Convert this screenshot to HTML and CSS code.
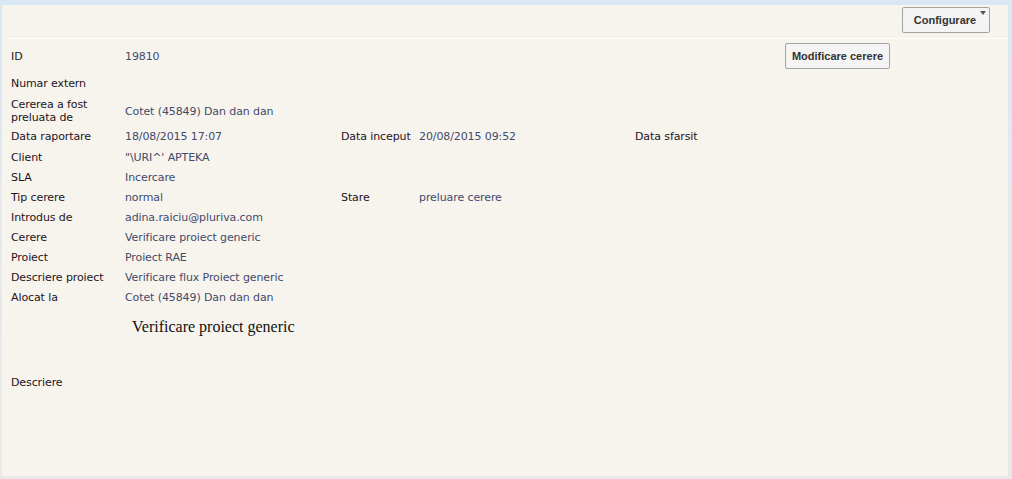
FILE: index.html
```html
<!DOCTYPE html>
<html lang="ro">
<head>
<meta charset="utf-8">
<title>Cerere 19810</title>
<link rel="stylesheet" href="styles.css">
</head>
<body>
<div class="panel">
  <div class="toolbar">
    <button class="btn btn-menu">Configurare<span class="caret"></span></button>
  </div>
  <div class="divider"></div>
  <div class="details">
    <div class="row row-id">
      <span class="lbl">ID</span><span class="val">19810</span><span></span><span></span><span></span>
      <button class="btn btn-edit">Modificare cerere</button>
    </div>
    <div class="row row-tall"><span class="lbl">Numar extern</span><span class="val"></span></div>
    <div class="row row-two"><span class="lbl">Cererea a fost<br>preluata de</span><span class="val">Cotet (45849) Dan dan dan</span></div>
    <div class="row row-21">
      <span class="lbl">Data raportare</span><span class="val">18/08/2015 17:07</span>
      <span class="lbl">Data inceput</span><span class="val">20/08/2015 09:52</span>
      <span class="lbl">Data sfarsit</span>
    </div>
    <div class="row"><span class="lbl">Client</span><span class="val">"\URI^' APTEKA</span></div>
    <div class="row"><span class="lbl">SLA</span><span class="val">Incercare</span></div>
    <div class="row">
      <span class="lbl">Tip cerere</span><span class="val">normal</span>
      <span class="lbl">Stare</span><span class="val">preluare cerere</span>
    </div>
    <div class="row"><span class="lbl">Introdus de</span><span class="val">adina.raiciu@pluriva.com</span></div>
    <div class="row"><span class="lbl">Cerere</span><span class="val">Verificare proiect generic</span></div>
    <div class="row"><span class="lbl">Proiect</span><span class="val">Proiect RAE</span></div>
    <div class="row"><span class="lbl">Descriere proiect</span><span class="val">Verificare flux Proiect generic</span></div>
    <div class="row"><span class="lbl">Alocat la</span><span class="val">Cotet (45849) Dan dan dan</span></div>
    <div class="row row-desc">
      <span class="lbl">Descriere</span>
      <div class="desc-body"><p class="desc-text">Verificare proiect generic</p></div>
    </div>
  </div>
</div>
</body>
</html>
```
FILE: styles.css
```css
html, body {
  margin: 0;
  padding: 0;
}
body {
  width: 1012px;
  height: 479px;
  background: linear-gradient(to bottom, #d9e8f4 0%, #e4e9ee 40%, #e8e8e8 100%);
  font-family: "DejaVu Sans", Verdana, sans-serif;
  font-size: 11px;
  line-height: 13px;
  letter-spacing: -0.1px;
  overflow: hidden;
}
.panel {
  margin: 5px 4px 0 2px;
  height: 471px;
  background: #f7f4ee;
  box-sizing: border-box;
}
.toolbar {
  height: 33px;
  display: flex;
  justify-content: flex-end;
  align-items: flex-start;
  padding: 2px 18px 0 0;
  box-sizing: border-box;
}
.btn {
  font-family: "Liberation Sans", Arial, sans-serif;
  font-weight: bold;
  font-size: 11px;
  letter-spacing: 0;
  color: #333;
  background: #f4f4f4;
  border: 1px solid #a3a3a3;
  border-radius: 2px;
  height: 26px;
  padding: 0;
  cursor: pointer;
}
.btn-menu {
  position: relative;
  width: 88px;
  padding-right: 2px;
}
.caret {
  position: absolute;
  top: 3px;
  right: 3px;
  width: 0;
  height: 0;
  border-left: 3.5px solid transparent;
  border-right: 3.5px solid transparent;
  border-top: 4px solid #555;
}
.divider {
  height: 1px;
  background: #ffffff;
  margin-left: 5px;
}
.details {
  padding: 4px 0 0 9px;
}
.row {
  display: grid;
  grid-template-columns: 114px 216px 78px 216px 150px auto;
  height: 20px;
  align-items: center;
}
.row-id {
  height: 27px;
  align-items: start;
}
.row-id .lbl, .row-id .val {
  align-self: center;
}
.row-tall {
  height: 26px;
}
.row-two {
  height: 30px;
}
.row-21 {
  height: 21px;
}
.lbl {
  color: #1d1320;
}
.val {
  color: #434a6a;
}
.btn-edit {
  width: 105px;
  justify-self: start;
}
.row-desc {
  height: 150px;
}
.desc-body {
  grid-column: 2 / 6;
  align-self: start;
  padding: 11px 0 0 7px;
}
.desc-text {
  margin: 0;
  font-family: "Liberation Serif", "Times New Roman", serif;
  font-size: 16px;
  line-height: 18px;
  letter-spacing: 0;
  color: #111;
}
```
